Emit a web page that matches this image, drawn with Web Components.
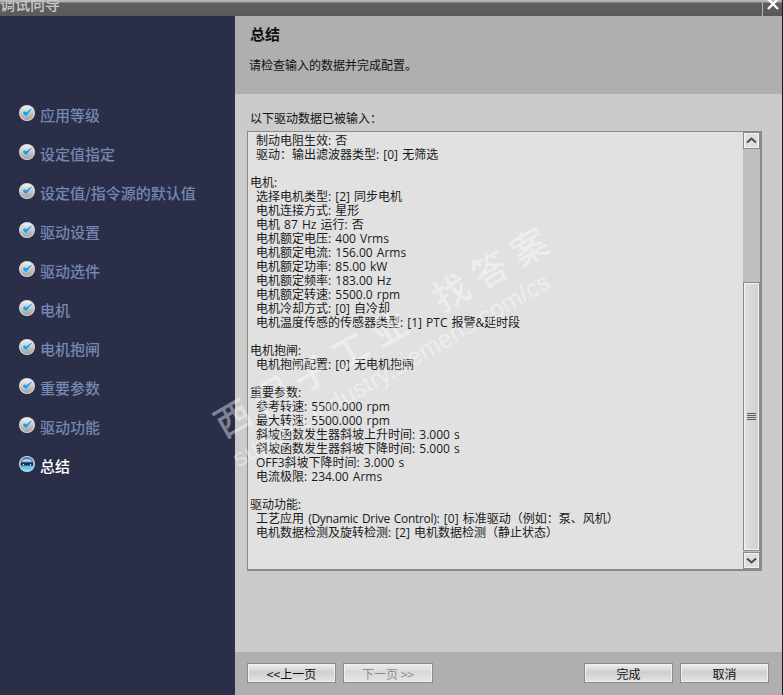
<!DOCTYPE html>
<html lang="zh">
<head>
<meta charset="utf-8">
<title>调试向导</title>
<style>
  html, body { margin: 0; padding: 0; width: 783px; height: 695px; overflow: hidden; background: #cbcbcb; }
  body { font-family: "Open Sans", "Noto Sans CJK SC", sans-serif; font-size: 12px; color: #111; }
  .mid { font-family: "Noto Sans CJK TC", sans-serif; line-height: 0; }
  .tight { letter-spacing: -0.28px; }
</style>
</head>
<body>
<wizard-window>
  <title-bar slot="title">调试向导</title-bar>
  <step-list slot="steps">
    <step-item>应用等级</step-item>
    <step-item>设定值指定</step-item>
    <step-item>设定值/指令源的默认值</step-item>
    <step-item>驱动设置</step-item>
    <step-item>驱动选件</step-item>
    <step-item>电机</step-item>
    <step-item>电机抱闸</step-item>
    <step-item>重要参数</step-item>
    <step-item>驱动功能</step-item>
    <step-item active>总结</step-item>
  </step-list>
  <page-header slot="header" heading="总结">请检查输入的数据并完成配置。</page-header>
  <summary-page slot="body">
    <span slot="label">以下驱动数据已被输入<span class="mid">：</span></span>
    <summary-line sub>制动电阻生效: 否</summary-line>
    <summary-line sub>驱动<span class="mid">：</span>输出滤波器类型: [0] 无筛选</summary-line>
    <summary-line></summary-line>
    <summary-line>电机:</summary-line>
    <summary-line sub>选择电机类型: [2] 同步电机</summary-line>
    <summary-line sub>电机连接方式: 星形</summary-line>
    <summary-line sub>电机 87 Hz 运行: 否</summary-line>
    <summary-line sub>电机额定电压: 400 Vrms</summary-line>
    <summary-line sub>电机额定电流: 156.00 Arms</summary-line>
    <summary-line sub>电机额定功率: 85.00 kW</summary-line>
    <summary-line sub>电机额定频率: 183.00 Hz</summary-line>
    <summary-line sub>电机额定转速: 5500.0 rpm</summary-line>
    <summary-line sub>电机冷却方式: [0] 自冷却</summary-line>
    <summary-line sub>电机温度传感的传感器类型: [1] PTC 报警<span class="tight">&amp;</span>延时段</summary-line>
    <summary-line></summary-line>
    <summary-line>电机抱闸:</summary-line>
    <summary-line sub>电机抱闸配置: [0] 无电机抱闸</summary-line>
    <summary-line></summary-line>
    <summary-line>重要参数:</summary-line>
    <summary-line sub>参考转速: 5500.000 rpm</summary-line>
    <summary-line sub>最大转速: 5500.000 rpm</summary-line>
    <summary-line sub>斜坡函数发生器斜坡上升时间: 3.000 s</summary-line>
    <summary-line sub>斜坡函数发生器斜坡下降时间: 5.000 s</summary-line>
    <summary-line sub>OFF3斜坡下降时间: 3.000 s</summary-line>
    <summary-line sub>电流极限: 234.00 Arms</summary-line>
    <summary-line></summary-line>
    <summary-line>驱动功能:</summary-line>
    <summary-line sub>工艺应用 <span class="tight">(Dynamic Drive Control)</span>: [0] 标准驱动（例如<span class="mid">：</span>泵<span class="mid">、</span>风机）</summary-line>
    <summary-line sub>电机数据检测及旋转检测: [2] 电机数据检测（静止状态）</summary-line>
  </summary-page>
  <button-bar slot="footer">
    <wizard-button slot="left">&lt;&lt;上一页</wizard-button>
    <wizard-button slot="left" wide disabled>下一页 &gt;&gt;</wizard-button>
    <wizard-button slot="right">完成</wizard-button>
    <wizard-button slot="right">取消</wizard-button>
  </button-bar>
</wizard-window>
<water-mark></water-mark>

<script>
class WizardWindow extends HTMLElement {
  constructor() {
    super();
    this.attachShadow({ mode: 'open' });
    this.shadowRoot.innerHTML = `
      <style>
        :host {
          display: grid;
          box-sizing: border-box;
          width: 783px;
          height: 695px;
          border-right: 1px solid #1c1c1c;
          grid-template-columns: 235px 1fr;
          grid-template-rows: 16px 78px 1fr 43px;
          grid-template-areas: "title title" "steps header" "steps body" "steps footer";
        }
        ::slotted([slot=title]) { grid-area: title; }
        ::slotted([slot=steps]) { grid-area: steps; }
        ::slotted([slot=header]) { grid-area: header; }
        ::slotted([slot=body]) { grid-area: body; }
        ::slotted([slot=footer]) { grid-area: footer; }
      </style>
      <slot name="title"></slot>
      <slot name="steps"></slot>
      <slot name="header"></slot>
      <slot name="body"></slot>
      <slot name="footer"></slot>
    `;
  }
}

class TitleBar extends HTMLElement {
  constructor() {
    super();
    this.attachShadow({ mode: 'open' });
    this.shadowRoot.innerHTML = `
      <style>
        :host {
          display: flex;
          justify-content: space-between;
          overflow: hidden;
          background: linear-gradient(#bdbdbd 0, #a8a8a8 2px, #5f5f5f 3px, #5a5a5a 100%);
          color: #c9c9c9;
          font-family: "Noto Sans CJK SC", sans-serif;
          font-size: 15px;
          line-height: 16px;
        }
        .text { margin-top: -4px; font-weight: 500; }
        .close {
          width: 19px;
          border-left: 1px solid #b5b5b5;
          display: flex;
          justify-content: center;
        }
        svg { display: block; margin-top: -2px; }
      </style>
      <span class="text"><slot></slot></span>
      <span class="close">
        <svg width="14" height="14" viewBox="0 0 14 14"><path d="M2 1 L12 11 M12 1 L2 11" stroke="#fff" stroke-width="2.4" fill="none"/></svg>
      </span>
    `;
  }
}

class StepList extends HTMLElement {
  constructor() {
    super();
    this.attachShadow({ mode: 'open' });
    this.shadowRoot.innerHTML = `
      <style>
        :host {
          display: flex;
          flex-direction: column;
          padding: 79px 0 0 19px;
          background: #2a2e48;
        }
      </style>
      <slot></slot>
    `;
  }
}

class StepItem extends HTMLElement {
  constructor() {
    super();
    this.attachShadow({ mode: 'open' });
    const active = this.hasAttribute('active');
    const id = Math.random().toString(36).slice(2);
    const mark = active
      ? `<circle cx="8" cy="8" r="7" fill="url(#on${id})"/>
         <rect x="2" y="6.5" width="12" height="3" fill="#232a44"/>
         <path d="M3.4 4.6 Q8 2 12.6 4.6 L12.6 5.6 L3.4 5.6 Z" fill="#c8d8f0"/>
         <rect x="4" y="8" width="1" height="1" fill="#fff"/><rect x="11" y="8" width="1" height="1" fill="#fff"/>`
      : `<path d="M3.2 8 L6.6 11.6 L13.2 4.6 L13 3.4 L6.8 8.6 L5 6.6 Z" fill="#ffffff"/>
         <path d="M4 8 L6.8 11 L12.6 4.2 L6.8 8 L5.4 6.6 Z" fill="#12a0ee" stroke="#12a0ee" stroke-width=".8"/>`;
    this.shadowRoot.innerHTML = `
      <style>
        :host {
          display: flex;
          align-items: center;
          gap: 5px;
          height: 39px;
          font-size: 15px;
          font-weight: 500;
          font-family: "Noto Sans CJK SC", sans-serif;
          color: ${active ? '#ffffff' : '#7587b1'};
        }
        svg { display: block; flex: none; margin-top: -4px; }
      </style>
      <svg width="16" height="16" viewBox="0 0 16 16">
        <defs>
          <linearGradient id="off${id}" x1="0" y1="0" x2="0" y2="1">
            <stop offset="0" stop-color="#f0f0f0"/><stop offset="1" stop-color="#a0a0a0"/>
          </linearGradient>
          <linearGradient id="on${id}" x1="0" y1="0" x2="0" y2="1">
            <stop offset="0" stop-color="#3f6fc4"/><stop offset="1" stop-color="#6fe4fb"/>
          </linearGradient>
        </defs>
        <circle cx="8" cy="8" r="8" fill="#dcdcdc"/>
        <circle cx="8" cy="8" r="7" fill="url(#off${id})"/>
        ${mark}
      </svg>
      <span><slot></slot></span>
    `;
  }
}

class PageHeader extends HTMLElement {
  constructor() {
    super();
    this.attachShadow({ mode: 'open' });
    this.shadowRoot.innerHTML = `
      <style>
        :host {
          display: flex;
          flex-direction: column;
          padding: 8px 0 0 15px;
          background: #afafaf;
          font-family: "Noto Sans CJK SC", sans-serif;
        }
        h1 { margin: 0; font-size: 15px; line-height: 20px; font-weight: 700; color: #111; }
        p { margin: 12px 0 0 -1px; font-size: 12px; line-height: 18px; color: #111; }
      </style>
      <h1>${this.getAttribute('heading')}</h1>
      <p><slot></slot></p>
    `;
  }
}

class SummaryPage extends HTMLElement {
  constructor() {
    super();
    this.attachShadow({ mode: 'open' });
    this.shadowRoot.innerHTML = `
      <style>
        :host {
          display: flex;
          flex-direction: column;
          padding: 15px 20px 0 12px;
          background: #cbcbcb;
          min-height: 0;
        }
        .label { margin: 0 0 4px 3px; height: 18px; line-height: 18px; font-family: "Noto Sans CJK SC", sans-serif; }
        .box {
          display: flex;
          height: 440px;
          box-sizing: border-box;
          border: 1px solid #8a8a8a;
          border-right-width: 2px;
          border-bottom-width: 2px;
          background: #e1e1e1;
        }
        .lines { flex: 1; padding: 2px 0 0 2px; overflow: hidden; }
      </style>
      <div class="label"><slot name="label"></slot></div>
      <div class="box">
        <div class="lines"><slot></slot></div>
        <scroll-bar></scroll-bar>
      </div>
    `;
  }
}

class SummaryLine extends HTMLElement {
  constructor() {
    super();
    this.attachShadow({ mode: 'open' });
    this.shadowRoot.innerHTML = `
      <style>
        :host {
          display: block;
          height: 14px;
          line-height: 14px;
          font-size: 12px;
          word-spacing: 1px;
          white-space: nowrap;
          color: #1a1a1a;
        }
        :host([sub]) { padding-left: 6px; }
      </style>
      <slot></slot>
    `;
  }
}

class ScrollBar extends HTMLElement {
  constructor() {
    super();
    this.attachShadow({ mode: 'open' });
    this.shadowRoot.innerHTML = `
      <style>
        :host {
          display: flex;
          flex-direction: column;
          flex: none;
          width: 17px;
          background: #bfbfbf;
        }
        .btn, .thumb {
          box-sizing: border-box;
          width: 17px;
          border: 1px solid #f4f4f4;
          outline: 1px solid #8a8a8a;
          outline-offset: -1px;
          box-shadow: inset 0 0 0 1px #f4f4f4;
          display: flex;
          align-items: center;
          justify-content: center;
        }
        .btn { height: 17px; background: #dedede; }
        .track { height: 133px; }
        .thumb {
          height: 269px;
          margin-bottom: 1px;
          background: linear-gradient(90deg, #e2e2e2, #cfcfcf);
        }
        svg { display: block; }
      </style>
      <div class="btn"><svg width="11" height="7" viewBox="0 0 11 7"><path d="M1 5.5 L5.5 1.5 L10 5.5" fill="none" stroke="#4c4c4c" stroke-width="2"/></svg></div>
      <div class="track"></div>
      <div class="thumb"><svg width="9" height="8" viewBox="0 0 9 8"><path d="M0 .5H9M0 2.5H9M0 4.5H9M0 6.5H9" stroke="#5a5a5a" stroke-width="1"/></svg></div>
      <div class="btn"><svg width="11" height="7" viewBox="0 0 11 7"><path d="M1 1.5 L5.5 5.5 L10 1.5" fill="none" stroke="#4c4c4c" stroke-width="2"/></svg></div>
    `;
  }
}

class ButtonBar extends HTMLElement {
  constructor() {
    super();
    this.attachShadow({ mode: 'open' });
    this.shadowRoot.innerHTML = `
      <style>
        :host {
          display: flex;
          justify-content: space-between;
          padding: 11px 13px 0 12px;
          background: #afafaf;
        }
        .group { display: flex; gap: 7px; }
      </style>
      <div class="group"><slot name="left"></slot></div>
      <div class="group"><slot name="right"></slot></div>
    `;
  }
}

class WizardButton extends HTMLElement {
  constructor() {
    super();
    this.attachShadow({ mode: 'open' });
    this.shadowRoot.innerHTML = `
      <style>
        :host {
          display: flex;
          align-items: center;
          justify-content: center;
          box-sizing: border-box;
          width: 89px;
          height: 20px;
          border: 1px solid #8a8a8a;
          box-shadow: inset 0 0 0 1px #f0f0f0;
          background: linear-gradient(#f0f0f0 0, #cfcfcf 45%, #e4e4e4 100%);
          font-family: "Noto Sans CJK SC", sans-serif;
          font-size: 12px;
          color: #111;
        }
        :host([wide]) { width: 90px; }
        :host([disabled]) { color: #8f8f8f; background: linear-gradient(#ececec, #d8d8d8 45%, #e6e6e6); }
      </style>
      <slot></slot>
    `;
  }
}

// faint diagonal watermark that lies over the whole window
class WaterMark extends HTMLElement {
  constructor() {
    super();
    this.attachShadow({ mode: 'open' });
    this.shadowRoot.innerHTML = `
      <style>
        :host {
          position: absolute;
          left: 0;
          top: 0;
          width: 783px;
          height: 695px;
          overflow: hidden;
          pointer-events: none;
          color: rgba(255, 255, 255, .42);
          font-family: "Noto Sans CJK SC", sans-serif;
        }
        div {
          position: absolute;
          white-space: nowrap;
          transform: rotate(-30deg);
          transform-origin: 0 50%;
        }
        .cn {
          left: 216px;
          top: 405px;
          line-height: 40px;
          font-size: 36px;
          font-weight: 500;
          letter-spacing: 9px;
          word-spacing: 10px;
        }
        .url {
          left: 234px;
          top: 445px;
          line-height: 30px;
          font-size: 25px;
          font-family: "Liberation Sans", sans-serif;
        }
      </style>
      <div class="cn">西门子工业 找答案</div>
      <div class="url">support.industry.siemens.com/cs</div>
    `;
  }
}

customElements.define('wizard-window', WizardWindow);
customElements.define('title-bar', TitleBar);
customElements.define('step-list', StepList);
customElements.define('step-item', StepItem);
customElements.define('page-header', PageHeader);
customElements.define('summary-page', SummaryPage);
customElements.define('summary-line', SummaryLine);
customElements.define('scroll-bar', ScrollBar);
customElements.define('button-bar', ButtonBar);
customElements.define('wizard-button', WizardButton);
customElements.define('water-mark', WaterMark);
</script>
</body>
</html>
